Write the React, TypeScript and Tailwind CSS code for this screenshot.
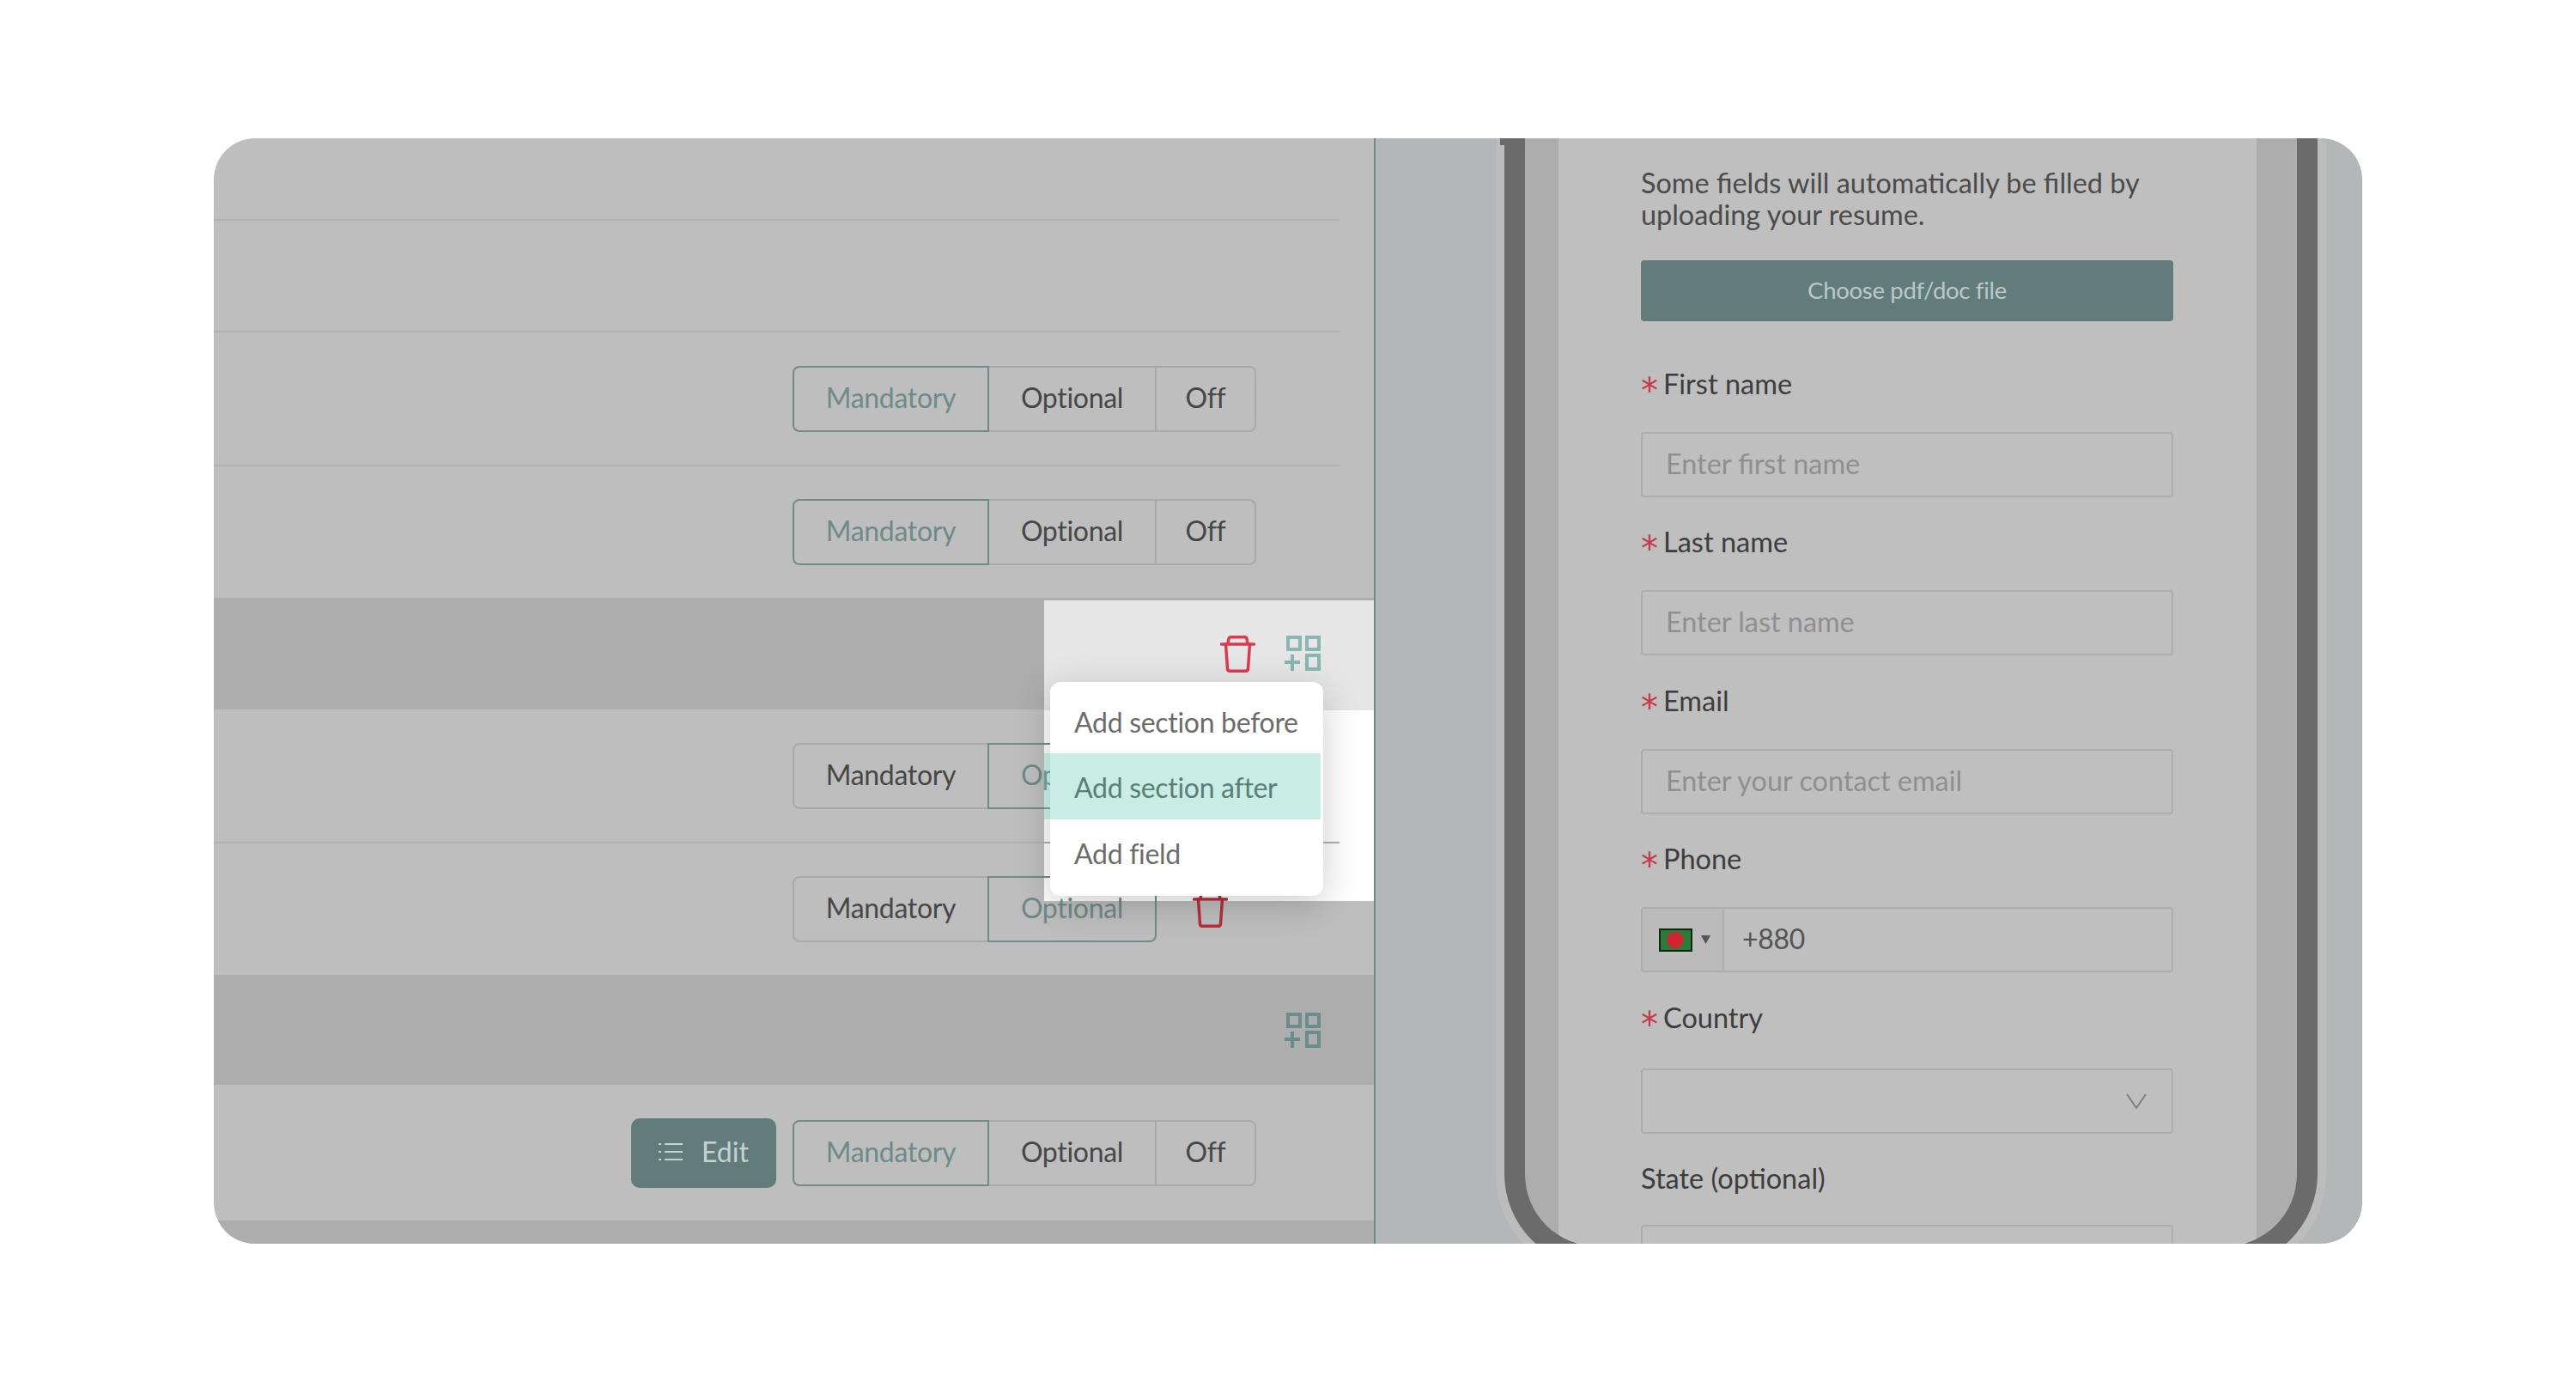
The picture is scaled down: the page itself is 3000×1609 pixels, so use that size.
import React from "react";

function Trash({ className }: { className: string }) {
  return (
    <svg width="41" height="43" viewBox="0 0 41 43" fill="none" stroke="currentColor" strokeWidth="3.5" strokeLinecap="round" strokeLinejoin="round" className={className}>
      <path d="M1.5 10H39.5" />
      <path d="M9 9.5L10 3.5Q10.3 1.7 12.5 1.7H28.5Q30.7 1.7 31 3.5L32 9.5" />
      <path d="M6.5 10L8.5 38.5Q8.8 41.3 11.5 41.3H29.5Q32.2 41.3 32.5 38.5L34.5 10" />
    </svg>
  );
}

function GridPlus({ className }: { className: string }) {
  return (
    <svg width="42" height="42" viewBox="0 0 42 42" fill="none" stroke="currentColor" strokeWidth="4" className={className}>
      <rect x="4" y="2" width="14" height="14" />
      <rect x="26" y="2" width="14" height="14" />
      <rect x="26" y="23" width="14" height="16" />
      <path d="M0 31H18M9 22V41" />
    </svg>
  );
}

function Group({ selected, off = true }: { selected: "m" | "o"; off?: boolean }) {
  const on = "border-[#6f8c8c] text-[#6f8a8a] z-[1]";
  const no = "border-[#a9a9a9] text-[#474747]";
  return (
    <div className="relative z-[2] flex h-[77px] text-[32px] tracking-[-0.3px]">
      <div className={`flex w-[229px] items-center justify-center rounded-l-[8px] border-2 pb-[3px] ${selected === "m" ? on : no}`}>Mandatory</div>
      <div className={`-ml-[2px] flex w-[197px] items-center justify-center border-2 pb-[3px] ${off ? "" : "rounded-r-[8px]"} ${selected === "o" ? on : no}`}>Optional</div>
      {off && (
        <div className="-ml-[2px] flex w-[118px] items-center justify-center rounded-r-[8px] border-2 border-[#a9a9a9] pb-[3px] text-[#474747]">Off</div>
      )}
    </div>
  );
}

function Divider() {
  return <div className="mr-[40px] h-[2px] bg-[#b1b1b1]" />;
}

function Label({ text, star = true }: { text: string; star?: boolean }) {
  return (
    <div className="flex h-[37px] items-center pb-[3px] text-[32.5px] text-[#3d3d3d]">
      {star && <span className="mt-[16px] w-[26px] font-['DejaVu_Sans',sans-serif] text-[40px] leading-none text-[#c43c4e]">*</span>}
      {text}
    </div>
  );
}

function TextField({ placeholder }: { placeholder: string }) {
  return (
    <input
      readOnly
      placeholder={placeholder}
      className="block h-[76px] w-full rounded-[4px] border-2 border-[#adadad] bg-transparent pb-[3px] pl-[27px] text-[32.4px] outline-none placeholder:text-[#8f8f8f]"
    />
  );
}

export default function App() {
  return (
    <div className="h-[1609px] w-[3000px] bg-white pl-[249px] pt-[161px] font-['Lato',sans-serif]">
      <div className="flex h-[1287px] w-[2502px] overflow-hidden rounded-[48px]">
        {/* left editor panel */}
        <div className="relative isolate flex w-[1353px] flex-col border-r-2 border-[#6a8a8a] bg-[#bebebe]">
          <div className="h-[94px]" />
          <Divider />
          <div className="h-[128px]" />
          <Divider />
          <div className="flex h-[154px] items-center justify-end pr-[137px]">
            <Group selected="m" />
          </div>
          <Divider />
          <div className="flex h-[153px] items-center justify-end pr-[137px]">
            <Group selected="m" />
          </div>
          <div className="flex h-[130px] items-center justify-end bg-[#adadad] pr-[62px]">
            <Trash className="relative z-[2] mr-[34px] text-[#dc3a50]" />
            <GridPlus className="relative z-[2] text-[#8ab5b3]" />
          </div>
          <div className="flex h-[154px] items-center justify-end pr-[137px]">
            <Group selected="o" />
          </div>
          <div className="relative z-[2]">
            <Divider />
          </div>
          <div className="flex h-[153px] items-center justify-end pr-[170px]">
            <Group selected="o" off={false} />
            <Trash className="relative z-[2] ml-[42px] text-[#b5303f]" />
          </div>
          <div className="flex h-[128px] items-center justify-end bg-[#adadad] pr-[62px] pt-[2px]">
            <GridPlus className="text-[#6a8c8c]" />
          </div>
          <div className="flex h-[158px] items-center justify-end gap-[19px] pr-[137px]">
            <div className="flex h-[81px] w-[169px] items-center justify-center gap-[22px] rounded-[10px] bg-[#627b7b] pb-[2px] text-[32px] text-[#c5d2d2]">
              <svg width="28" height="24" viewBox="0 0 28 24" fill="none" stroke="currentColor" strokeWidth="2">
                <path d="M7 3H28M7 12H28M7 21H28M0 3H3M0 12H3M0 21H3" />
              </svg>
              <span>Edit</span>
            </div>
            <Group selected="m" />
          </div>
          <div className="flex-1 bg-[#adadad]" />

          {/* spotlight over the section row */}
          <div className="absolute left-[967px] top-[538px] z-[1] flex h-[350px] w-[384px] flex-col bg-white">
            <div className="h-[128px] bg-[#e6e6e6]" />
          </div>

          {/* menu */}
          <div className="absolute left-[974px] top-[633px] z-[3] h-[249px] w-[318px] rounded-[12px] bg-white pt-[6px] text-[32px] tracking-[-0.3px] text-[#6c6c6c] shadow-[0_10px_44px_rgba(0,0,0,0.2)]">
            <div className="flex h-[77px] items-center pl-[28px] pt-[5px]">Add section before</div>
            <div className="-ml-[7px] flex h-[77px] w-[322px] items-center bg-[rgba(100,200,180,0.35)] pl-[35px] pt-[3px] text-[#5a7f76]">Add section after</div>
            <div className="flex h-[77px] items-center pl-[28px] pt-[3px]">Add field</div>
          </div>
        </div>

        {/* right preview panel */}
        <div className="relative flex-1 overflow-hidden bg-[#b3b7b7] pl-[150px]">
          <div className="absolute left-[145px] top-0 h-[8px] w-[8px] bg-[#6b6b6b]" />
          <div className="-mt-[20px] h-[1334px] w-[947px] overflow-hidden rounded-b-[108px] border-x-[24px] border-b-[24px] border-[#6b6b6b] bg-[#adadad] shadow-[0_0_0_10px_#bcbcbc]">
            <div className="ml-[39px] h-full w-[813px] bg-[#bfbfbf] pl-[96px] pr-[97px] pt-[53px]">
              <p className="text-[32.4px] leading-[37px] text-[#4b4b4b]">
                Some fields will automatically be filled by uploading your resume.
              </p>
              <div className="mt-[35px] flex h-[71px] items-center justify-center rounded-[4px] bg-[#627b7b] pb-[2px] text-[27.5px] tracking-[-0.3px] text-[#bcc8c8]">
                Choose pdf/doc file
              </div>

              <div className="mt-[56px]"><Label text="First name" /></div>
              <div className="mt-[36px]"><TextField placeholder="Enter first name" /></div>

              <div className="mt-[35px]"><Label text="Last name" /></div>
              <div className="mt-[36px]"><TextField placeholder="Enter last name" /></div>

              <div className="mt-[36px]"><Label text="Email" /></div>
              <div className="mt-[36px]"><TextField placeholder="Enter your contact email" /></div>

              <div className="mt-[35px]"><Label text="Phone" /></div>
              <div className="mt-[36px] flex h-[76px] rounded-[4px] border-2 border-[#adadad]">
                <div className="flex w-[95px] items-center border-r-2 border-[#adadad] bg-[#bbbbbb] pl-[19px]">
                  <svg width="39" height="27" viewBox="0 0 39 27" className="shrink-0">
                    <rect x="0" y="0" width="39" height="27" fill="#0a2a10" />
                    <rect x="2" y="2" width="35" height="23" fill="#2d7a3a" />
                    <circle cx="19" cy="13.5" r="9.5" fill="#d2232f" />
                  </svg>
                  <svg width="11" height="10" viewBox="0 0 11 10" className="ml-[10px]">
                    <path d="M0 0H11L5.5 10Z" fill="#555555" />
                  </svg>
                </div>
                <div className="flex items-center pb-[3px] pl-[21px] text-[32px] tracking-[-0.3px] text-[#555555]">+880</div>
              </div>

              <div className="mt-[36px]"><Label text="Country" /></div>
              <div className="mt-[39px] flex h-[76px] items-center justify-end rounded-[4px] border-2 border-[#adadad] pr-[29px]">
                <svg width="24" height="18" viewBox="0 0 24 18" fill="none" stroke="#7e7e7e" strokeWidth="2">
                  <path d="M1 1L12 17L23 1" />
                </svg>
              </div>

              <div className="mt-[35px]"><Label text="State (optional)" star={false} /></div>
              <div className="mt-[34px]"><TextField placeholder="" /></div>
            </div>
          </div>
        </div>
      </div>
    </div>
  );
}
